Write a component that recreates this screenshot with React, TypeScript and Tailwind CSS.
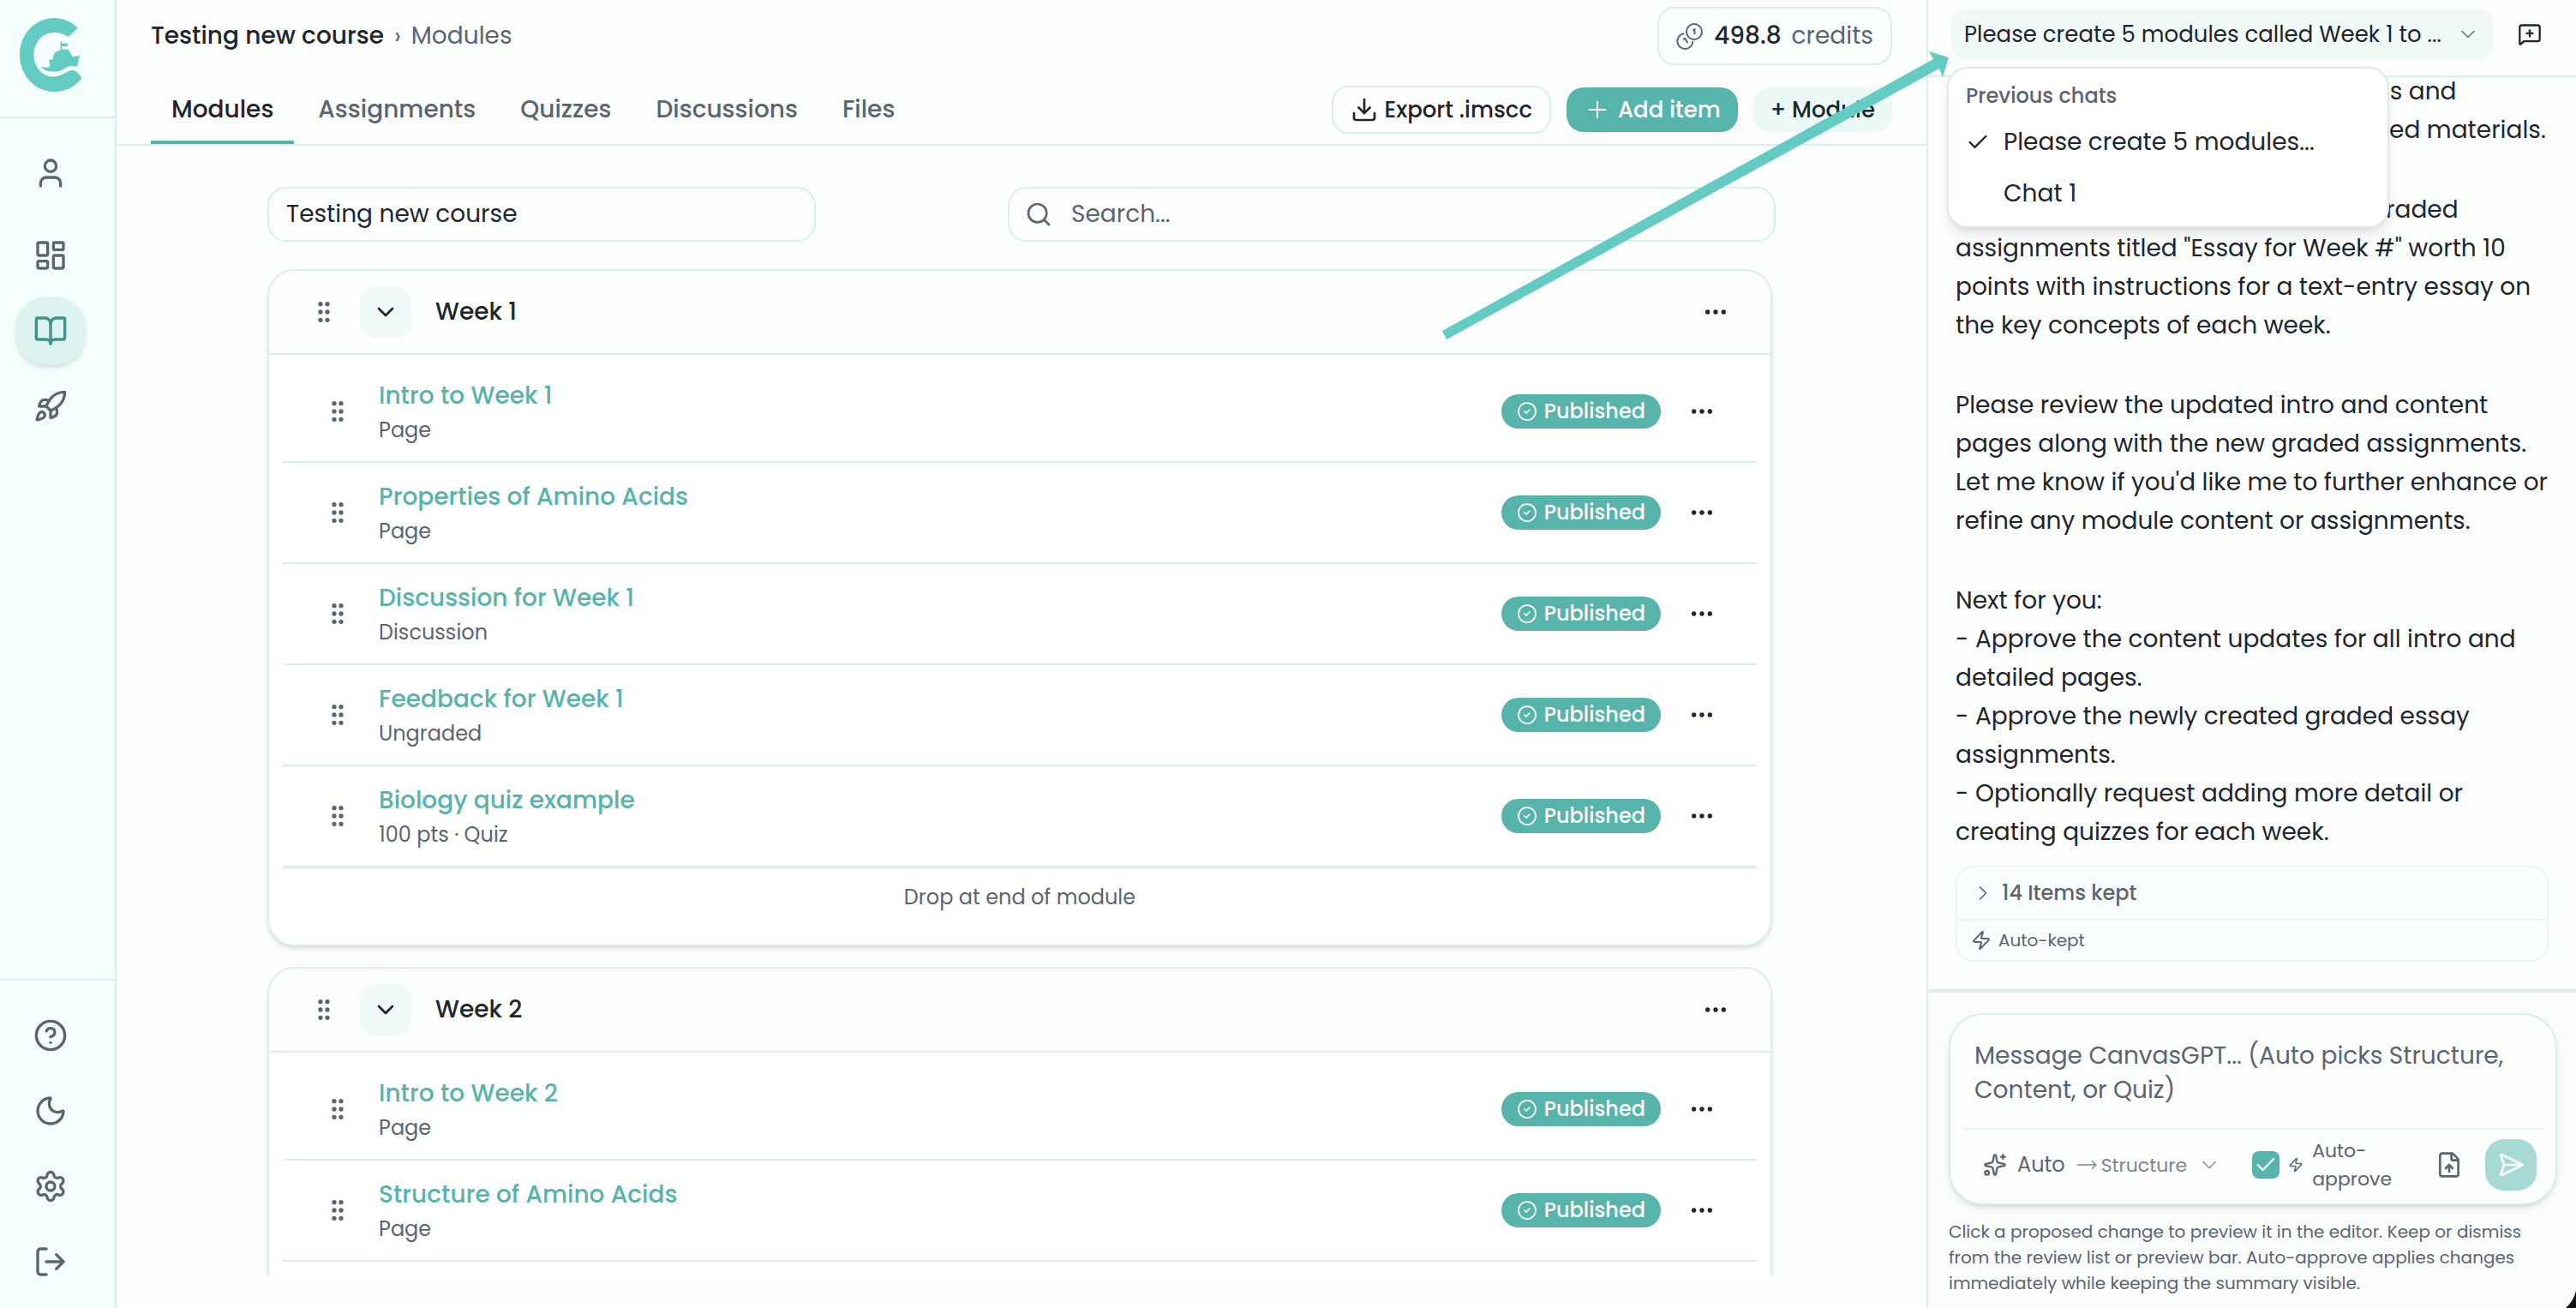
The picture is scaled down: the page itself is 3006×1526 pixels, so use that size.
import React from 'react';
import {
  BookOpen,
  Check,
  ChevronDown,
  ChevronRight,
  CircleCheck,
  CircleHelp,
  Download,
  Ellipsis,
  FileUp,
  GripVertical,
  LayoutDashboard,
  LogOut,
  MessageSquarePlus,
  Moon,
  MoveRight,
  Plus,
  Rocket,
  Search,
  SendHorizontal,
  Settings,
  Sparkles,
  User,
  Zap,
} from 'lucide-react';

interface ModuleItem {
  title: string;
  meta: string;
}

interface CourseModule {
  name: string;
  items: ModuleItem[];
}

const modules: CourseModule[] = [
  {
    name: 'Week 1',
    items: [
      { title: 'Intro to Week 1', meta: 'Page' },
      { title: 'Properties of Amino Acids', meta: 'Page' },
      { title: 'Discussion for Week 1', meta: 'Discussion' },
      { title: 'Feedback for Week 1', meta: 'Ungraded' },
      { title: 'Biology quiz example', meta: '100 pts · Quiz' },
    ],
  },
  {
    name: 'Week 2',
    items: [
      { title: 'Intro to Week 2', meta: 'Page' },
      { title: 'Structure of Amino Acids', meta: 'Page' },
      { title: 'Discussion for Week 2', meta: 'Discussion' },
    ],
  },
];

const message = [
  ['- Updated all the intro content pages and', 'detailed content pages with expanded materials.'],
  [
    '- Created one set of 5 new weekly graded',
    'assignments titled "Essay for Week #" worth 10',
    'points with instructions for a text-entry essay on',
    'the key concepts of each week.',
  ],
  [
    'Please review the updated intro and content',
    'pages along with the new graded assignments.',
    "Let me know if you'd like me to further enhance or",
    'refine any module content or assignments.',
  ],
  [
    'Next for you:',
    '- Approve the content updates for all intro and',
    'detailed pages.',
    '- Approve the newly created graded essay',
    'assignments.',
    '- Optionally request adding more detail or',
    'creating quizzes for each week.',
  ],
];

const tabs = ['Modules', 'Assignments', 'Quizzes', 'Discussions', 'Files'];

const Logo: React.FC = () => (
  <svg viewBox="0 0 100 110" className="h-[110px] w-[100px]" role="img" aria-label="CanvasGPT">
    <path
      fill="#63cbc2"
      d="M79.500 21.500C72 14.500 63 11 53.500 11 31 11 13 30 13 54s18 43 40.500 43c12.500 0 23-5.500 31-14.500.8-1 .8-2.200 0-3.200l-4.500-5c-2-2.200-7-3-10-1.300C64 76 59 79.500 52 79.500 39 79.500 29.500 68 29.500 54S39.500 28 53 28c6 0 11 1.500 15.500 4.200 1 .6 2 .4 2.800-.4l8.400-8c.7-.7.600-1.600-.2-2.300z"
    />
    <path
      fill="#63cbc2"
      d="M60.500 38.500h1.500v2h7.500l-1.200 1.800 1.200 1.800H62v3.400l8 .3c1.500 3.500 3 6.500 5.500 8.700l7.500-2-3.200 13.300-6.300-1c-6 0-10 6.700-19.500 6.700-7.500.3-13-1.500-16.500-5.500 3.500.8 7 1 10.500.3V62l-1-2 4.500-.5c.5-4 1.500-7.500 4.500-9.500l4.500-1.500z"
    />
  </svg>
);

const CoinsIcon: React.FC = () => (
  <svg viewBox="0 0 32 32" fill="none" stroke="currentColor" strokeWidth="2" strokeLinecap="round" className="h-8 w-8">
    <circle cx="21" cy="11" r="9" />
    <path d="M8.500 13.200a9 9 0 1 0 10.800 9.600" />
    <path d="M20 9.300l1.500-1v5.200M8.800 19.600l1.500-.7 2.700 4.600" />
  </svg>
);

interface NavButtonProps {
  label: string;
  active?: boolean;
  children: React.ReactNode;
}

const NavButton: React.FC<NavButtonProps> = ({ label, active, children }) => (
  <button
    aria-label={label}
    className={`flex h-20 w-[82px] items-center justify-center rounded-[36px] ${
      active ? 'bg-[#dcf3ef] text-[#3f9189] shadow-md' : 'text-[#5c6470]'
    }`}
  >
    {children}
  </button>
);

const Sidebar: React.FC = () => (
  <aside className="flex w-[136px] shrink-0 flex-col border-r-2 border-[#d9efea] bg-[#f4fffd]">
    <div className="h-[138px] shrink-0 border-b-2 border-[#d9efea] pt-[10px] pl-[10px]">
      <Logo />
    </div>
    <nav className="flex flex-1 flex-col gap-2 py-6 pl-[18px]">
      <NavButton label="Profile"><User size={40} /></NavButton>
      <div className="mt-2 flex flex-col gap-2">
        <NavButton label="Dashboard"><LayoutDashboard size={40} /></NavButton>
        <NavButton label="Courses" active><BookOpen size={40} /></NavButton>
        <NavButton label="Launch"><Rocket size={40} /></NavButton>
      </div>
    </nav>
    <div className="flex flex-col gap-2 border-t-2 border-[#d9efea] pt-6 pb-[14px] pl-[18px]">
      <NavButton label="Help"><CircleHelp size={40} /></NavButton>
      <NavButton label="Theme"><Moon size={40} /></NavButton>
      <NavButton label="Settings"><Settings size={40} /></NavButton>
      <NavButton label="Log out"><LogOut size={40} /></NavButton>
    </div>
  </aside>
);

const Header: React.FC = () => (
  <header className="shrink-0 border-b-2 border-[#d9efea] px-10">
    <div className="flex h-[84px] items-center justify-between">
      <p className="flex items-center gap-3 text-[28px] text-[#5c6470]">
        <span className="font-medium text-[#21252e]">Testing new course</span>
        <span>›</span>
        <span>Modules</span>
      </p>
      <button className="flex h-[68px] items-center gap-3 rounded-[20px] border-2 border-[#d9efea] bg-[#fafefd] px-5 text-[28px] text-[#5c6470]">
        <CoinsIcon />
        <span className="font-medium text-[#21252e]">498.8</span>
        <span>credits</span>
      </button>
    </div>
    <div className="flex h-[84px] items-stretch justify-between">
      <div className="flex gap-1" role="tablist">
        {tabs.map((tab, i) => (
          <button
            key={tab}
            role="tab"
            aria-selected={i === 0}
            className={`border-b-4 px-6 pt-2 text-[28px] font-medium ${
              i === 0 ? 'border-[#56b4ab] text-[#21252e]' : 'border-transparent text-[#5c6470]'
            }`}
          >
            {tab}
          </button>
        ))}
      </div>
      <div className="flex items-center gap-[18px] pt-1 text-[26px] font-medium text-[#21252e]">
        <button className="flex h-14 items-center gap-2 rounded-[20px] border-2 border-[#d9efea] px-5">
          <Download size={32} />
          Export .imscc
        </button>
        <button className="flex h-[52px] items-center gap-2 rounded-[20px] bg-[#56b4ab] px-5 text-white">
          <Plus size={32} strokeWidth={1.5} />
          Add item
        </button>
        <button className="h-[52px] rounded-[20px] bg-[#eaf9f6] px-5">+ Module</button>
      </div>
    </div>
  </header>
);

const ModuleRow: React.FC<{ item: ModuleItem }> = ({ item }) => (
  <li className="flex h-[118px] shrink-0 items-center border-b-2 border-[#d9efea] px-12">
    <GripVertical size={32} className="text-[#5c6470]" />
    <div className="ml-8 flex-1 pt-1">
      <a href="#" className="block text-[28px] leading-[40px] font-medium text-[#56b4ab]">{item.title}</a>
      <p className="text-[24px] leading-[40px] text-[#5c6470]">{item.meta}</p>
    </div>
    <span className="flex h-10 items-center gap-2 rounded-full bg-[#56b4ab] px-[18px] text-[24px] font-medium text-white">
      <CircleCheck size={24} strokeWidth={1.75} />
      Published
    </span>
    <button aria-label="Item options" className="ml-8 text-[#21252e]">
      <Ellipsis size={32} />
    </button>
  </li>
);

const ModuleCard: React.FC<{ module: CourseModule }> = ({ module }) => (
  <section className="shrink-0 overflow-hidden rounded-[32px] border-2 border-[#d9efea] bg-white shadow-md">
    <div className="flex h-[98px] items-center border-b-2 border-[#d9efea] bg-[#fcfffe] px-12 text-[#21252e]">
      <GripVertical size={32} className="text-[#5c6470]" />
      <button aria-label="Collapse" className="ml-[26px] flex h-[60px] w-[60px] items-center justify-center rounded-[18px] bg-[#f0f9f7]">
        <ChevronDown size={32} />
      </button>
      <h2 className="ml-7 flex-1 text-[28px] font-medium">{module.name}</h2>
      <button aria-label="Module options">
        <Ellipsis size={32} />
      </button>
    </div>
    <ul className="px-4 pt-2">
      {module.items.map((item) => (
        <ModuleRow key={item.title} item={item} />
      ))}
    </ul>
    <p className="mx-4 mb-6 h-[66px] border-t-2 border-[#e6f4f1] text-center text-[24px] leading-[66px] text-[#5c6470]">
      Drop at end of module
    </p>
  </section>
);

const Content: React.FC = () => (
  <main className="mb-[38px] min-h-0 flex-1 overflow-hidden">
    <div className="mx-auto flex max-w-[1760px] flex-col pt-12">
      <div className="flex justify-between gap-8">
        <input
          aria-label="Course name"
          defaultValue="Testing new course"
          className="h-16 w-[640px] rounded-[22px] border-2 border-[#d9efea] px-5 text-[28px] text-[#21252e]"
        />
        <label className="flex h-16 w-[896px] items-center gap-[22px] rounded-[22px] border-2 border-[#d9efea] px-[18px]">
          <Search size={32} className="text-[#5c6470]" />
          <input
            aria-label="Search"
            placeholder="Search..."
            className="flex-1 bg-transparent text-[28px] placeholder:text-[#5c6470]"
          />
        </label>
      </div>
      <div className="mt-8 flex flex-col gap-6 pr-1">
        {modules.map((m) => (
          <ModuleCard key={m.name} module={m} />
        ))}
      </div>
    </div>
  </main>
);

const ChatMenu: React.FC = () => (
  <div
    role="menu"
    className="absolute top-[68px] left-[-4px] z-10 w-[516px] rounded-[24px] border-2 border-[#e3e8e7] bg-white pt-[10px] pb-2 pl-5 text-[28px] text-[#21252e] shadow-lg"
  >
    <p className="h-[46px] text-[24px] leading-[44px] font-medium text-[#5c6470]">Previous chats</p>
    <button role="menuitem" className="flex h-[60px] w-full items-center gap-4">
      <Check size={28} />
      Please create 5 modules...
    </button>
    <button role="menuitem" className="flex h-[60px] w-full items-center pl-11">
      Chat 1
    </button>
  </div>
);

const Composer: React.FC = () => (
  <div className="border-t-4 border-[#dbefeb] bg-[#fafcfc] pt-6 pr-[22px] pb-[14px] pl-6">
    <div className="flex h-[224px] flex-col rounded-[40px] border-2 border-[#d9efea] bg-[#fcfefe] px-[14px] shadow-md">
      <textarea
        aria-label="Message"
        placeholder="Message CanvasGPT... (Auto picks Structure, Content, or Quiz)"
        className="h-[132px] w-full resize-none bg-transparent px-[14px] pt-7 text-[28px] leading-[40px] placeholder:text-[#5c6470]"
      />
      <div className="flex flex-1 items-center border-t-2 border-[#e6f5f2] pr-2 pb-1 pl-6 text-[#5c6470]">
        <button className="flex items-center gap-3 text-[24px]">
          <Sparkles size={28} />
          Auto
          <span className="flex items-center gap-1 text-[22px] text-[#7d8590]">
            <MoveRight size={26} strokeWidth={1.25} />
            Structure
          </span>
          <ChevronDown size={28} strokeWidth={1.5} className="text-[#8f969f]" />
        </button>
        <label className="ml-9 flex items-center gap-2.5 text-[22px] leading-[33px]">
          <span className="grid h-8 w-8 place-items-center">
            <input
              type="checkbox"
              defaultChecked
              className="col-start-1 row-start-1 h-8 w-8 appearance-none rounded-lg bg-[#56b4ab]"
            />
            <Check size={28} className="pointer-events-none col-start-1 row-start-1 text-white" />
          </span>
          <Zap size={18} />
          <span className="w-[110px]">Auto-<br />approve</span>
        </label>
        <button aria-label="Attach file" className="ml-auto">
          <FileUp size={32} />
        </button>
        <button aria-label="Send" className="ml-[26px] flex h-[60px] w-[60px] items-center justify-center rounded-[22px] bg-[#a8dad5] text-white">
          <SendHorizontal size={32} />
        </button>
      </div>
    </div>
    <p className="mt-4 w-[690px] text-[20px] leading-[30px] text-[#5c6470]">
      Click a proposed change to preview it in the editor. Keep or dismiss
      from the review list or preview bar. Auto-approve applies changes
      immediately while keeping the summary visible.
    </p>
  </div>
);

const ChatPanel: React.FC = () => (
  <aside className="flex w-[758px] shrink-0 flex-col border-l-2 border-[#d9efea]">
    <div className="relative flex h-[90px] shrink-0 items-start justify-between border-b-2 border-[#d9efea] pt-[10px] pr-10 pl-[26px]">
      <div className="relative">
        <button
          aria-haspopup="menu"
          aria-expanded="true"
          className="flex h-[60px] w-[634px] items-center justify-between rounded-[20px] bg-[#f0f9f6] px-4 text-[26px] whitespace-nowrap text-[#21252e]"
        >
          Please create 5 modules called Week 1 to ...
          <ChevronDown size={28} strokeWidth={1.5} className="shrink-0 text-[#6f7681]" />
        </button>
        <ChatMenu />
      </div>
      <button aria-label="New chat" className="flex h-[60px] items-center text-[#21252e]">
        <MessageSquarePlus size={28} />
      </button>
    </div>
    <div className="flex min-h-0 flex-1 flex-col justify-end overflow-hidden px-8">
      <div className="flex flex-col gap-12 text-[28px] leading-[45px] text-[#21252e]">
        {message.map((lines) => (
          <p key={lines[0]} className="whitespace-pre">{lines.join('\n')}</p>
        ))}
      </div>
      <div className="mt-[17px] mb-8 shrink-0 rounded-[20px] border-2 border-[#e9f6f3] bg-[#fafdfd] text-[#5c6470]">
        <button className="flex h-[60px] w-full items-center gap-2 pl-4 text-[24px] font-medium">
          <ChevronRight size={28} strokeWidth={1.5} />
          14 Items kept
        </button>
        <div className="flex h-12 items-center gap-2 border-t-2 border-[#edf7f5] pl-4 text-[20px]">
          <Zap size={24} />
          Auto-kept
        </div>
      </div>
    </div>
    <Composer />
  </aside>
);

const App: React.FC = () => (
  <div className="relative flex h-screen overflow-hidden bg-[#fcfefd] font-['Poppins','Inter',sans-serif]">
    <Sidebar />
    <div className="flex min-w-0 flex-1 flex-col">
      <Header />
      <Content />
    </div>
    <ChatPanel />
    {/* callout pointing at the chat switcher */}
    <svg viewBox="0 0 592 338" className="pointer-events-none absolute top-[60px] right-[732px] z-20 h-[338px] w-[592px]">
      <path fill="#63cbc2" d="M1 326L574 9 569 0 592 7 585 30 581 20 6 336z" />
    </svg>
    {/* window corner */}
    <svg viewBox="0 0 12 20" className="pointer-events-none absolute right-0 bottom-0 h-5 w-3">
      <path fill="#111" d="M12 0Q9 12 0 20H12z" />
    </svg>
  </div>
);

export default App;
